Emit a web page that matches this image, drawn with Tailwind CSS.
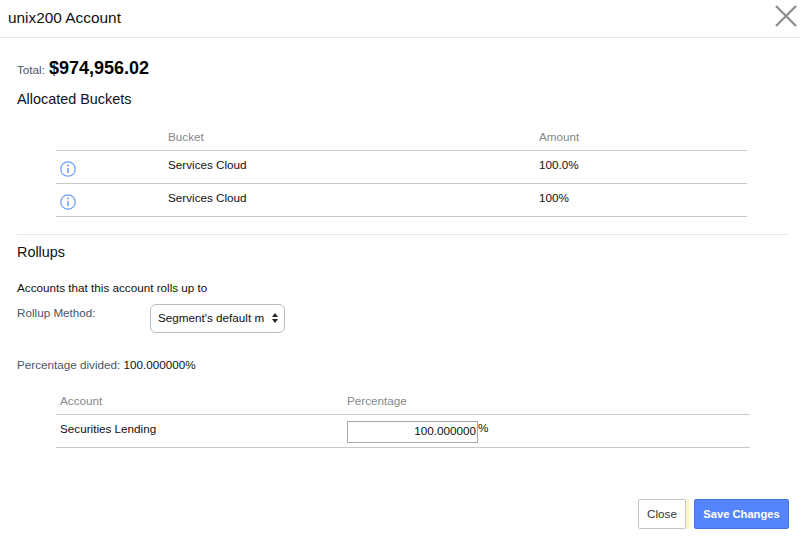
<!DOCTYPE html>
<html lang="en">
<head>
  <meta charset="UTF-8">
  <title>unix200 Account</title>
  <script src="https://cdn.jsdelivr.net/npm/@tailwindcss/browser@4"></script>
</head>
<body class="bg-white w-[800px] h-[536px] overflow-hidden font-['Liberation_Sans',Arial,sans-serif] text-[11.7px] text-[#111]">
  <header class="h-[38px] border-b border-[#e5e5e5] flex items-center justify-between pl-2 pr-[2px]">
    <h1 class="text-[15.4px] leading-[36px] mb-[2px] text-[#111]">unix200 Account</h1>
    <svg class="w-[24px] h-[24px] mb-[5px]" viewBox="0 0 24 24" fill="none" stroke="#8e9095" stroke-width="2.4"><path d="M2 2 L22 22 M22 2 L2 22"/></svg>
  </header>

  <main class="pl-[17px] pr-[11px]">
    <div class="h-[22px] mt-[17px] flex items-baseline">
      <span class="text-[#4a5568]">Total:</span>
      <span class="ml-[4px] text-[18px] font-bold text-black">$974,956.02</span>
    </div>
    <h2 class="mt-[13px] text-[14.4px] leading-[18px]">Allocated Buckets</h2>

    <div class="ml-[39px] mr-[42px] mt-[11px]">
      <div class="grid grid-cols-[112px_371px_1fr] h-[32px] pt-[4px] items-center border-b border-[#c8c8c8] text-[#85878c]">
        <span></span><span>Bucket</span><span>Amount</span>
      </div>
      <div class="grid grid-cols-[112px_371px_1fr] h-[33px] border-b border-[#c8c8c8]">
        <span class="pl-[4px] pt-[10px]"><svg class="w-[16px] h-[16px]" viewBox="0 0 16 16" fill="none" stroke="#6a9cf5" stroke-width="1.25"><circle cx="8" cy="8" r="7.2"/><path d="M8 7v5" stroke-width="1.5"/><circle cx="8" cy="4.6" r="1" fill="#6a9cf5" stroke="none"/></svg></span>
        <span class="pt-[5px]">Services Cloud</span>
        <span class="pt-[5px]">100.0%</span>
      </div>
      <div class="grid grid-cols-[112px_371px_1fr] h-[33px] border-b border-[#c8c8c8]">
        <span class="pl-[4px] pt-[10px]"><svg class="w-[16px] h-[16px]" viewBox="0 0 16 16" fill="none" stroke="#6a9cf5" stroke-width="1.25"><circle cx="8" cy="8" r="7.2"/><path d="M8 7v5" stroke-width="1.5"/><circle cx="8" cy="4.6" r="1" fill="#6a9cf5" stroke="none"/></svg></span>
        <span class="pt-[5px]">Services Cloud</span>
        <span class="pt-[5px]">100%</span>
      </div>
    </div>

    <div class="mt-[17px] border-t border-[#e8e8e8]"></div>

    <h2 class="mt-[8px] text-[14.4px] leading-[18px]">Rollups</h2>
    <p class="mt-[20px] leading-[14px]">Accounts that this account rolls up to</p>

    <div class="mt-[9px] flex items-start h-[29px]">
      <label class="w-[133px] pt-[2px] leading-[14px] text-[#4a5568]">Rollup Method:</label>
      <div class="w-[135px] h-[29px] border border-[#bdbdbd] rounded-[6px] flex items-center justify-between pl-[7px] pr-[6px] pb-[1px] text-[#111]">
        <span>Segment's default m</span>
        <svg class="w-[6px] h-[10px]" viewBox="0 0 6 10" fill="#222"><path d="M3 0 L6 4 H0 Z M0 6 H6 L3 10 Z"/></svg>
      </div>
    </div>

    <p class="mt-[25px] leading-[14px]"><span class="text-[#4a5568]">Percentage divided:</span> 100.000000%</p>

    <div class="ml-[39px] mr-[39px] mt-[14px]">
      <div class="grid grid-cols-[287px_1fr] h-[29px] items-center border-b border-[#c8c8c8] text-[#85878c] pl-[4px] pt-[1px]">
        <span>Account</span><span>Percentage</span>
      </div>
      <div class="grid grid-cols-[287px_1fr] h-[33px] border-b border-[#c8c8c8] pl-[4px]">
        <span class="pt-[5px]">Securities Lending</span>
        <div class="flex items-start pt-[6px]">
          <input class="w-[131px] h-[22px] border border-[#a9a9a9] text-right text-[11.7px] pr-[1px] pb-[3px] text-[#111] outline-none" value="100.000000">
          <span class="leading-[14px]">%</span>
        </div>
      </div>
    </div>
  </main>

  <footer class="mt-[51px] flex justify-end pr-[11px]">
    <button class="w-[48px] h-[30px] bg-white border border-[#c4c4c4] rounded-[2px] text-[#333]">Close</button>
    <span class="w-[3px] h-[30px] bg-[#fbf6c9]"></span>
    <button class="ml-[5px] w-[95px] h-[30px] bg-[#5585fb] border border-[#4a73e0] rounded-[2px] text-[11.2px] text-white font-bold">Save Changes</button>
  </footer>
</body>
</html>
